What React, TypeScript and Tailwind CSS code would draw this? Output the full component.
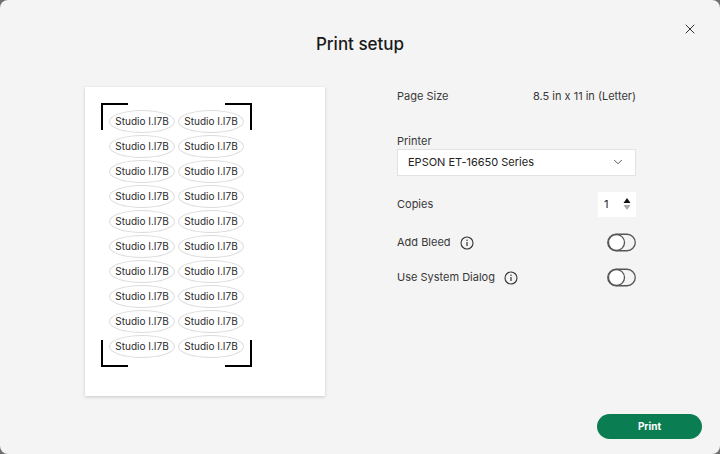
import { X, ChevronDown } from "lucide-react";

const rows = Array.from({ length: 10 }, (_, i) => i);

function LabelPill() {
  return (
    <div className="flex h-[23px] w-[66px] items-center justify-center rounded-[50%] border border-[#dcdcdc] text-[10px] text-[#2a2a2a]">
      Studio I.I7B
    </div>
  );
}

function InfoIcon() {
  return (
    <svg width="14" height="14" viewBox="0 0 14 14" className="text-[#333]">
      <circle cx="7" cy="7" r="6" fill="none" stroke="currentColor" strokeWidth="1.1" />
      <rect x="6.4" y="6" width="1.2" height="4" fill="currentColor" />
      <circle cx="7" cy="4.3" r="0.75" fill="currentColor" />
    </svg>
  );
}

function Toggle() {
  return (
    <svg width="29" height="19" viewBox="0 0 29 19">
      <rect x="0.75" y="1.25" width="27.5" height="16.5" rx="8.25" fill="none" stroke="#555" strokeWidth="1.3" />
      <circle cx="9.5" cy="9.5" r="8" fill="#fff" stroke="#555" strokeWidth="1.3" />
    </svg>
  );
}

function CropMark({ className }: { className: string }) {
  return <div className={`h-[27px] w-[27px] border-black ${className}`} />;
}

export default function App() {
  return (
    <div className="h-[454px] w-[720px] bg-[#6f6f6f] font-['Inter',sans-serif]">
      <div className="relative flex h-full w-full flex-col rounded-[8px] bg-[#f4f4f4]">
        <button type="button" className="absolute right-[22px] top-[21px] text-[#222]">
          <X size={16} strokeWidth={1.4} />
        </button>
        <h1 className="pt-[32px] text-center text-[17px] font-medium text-[#1a1a1a]">Print setup</h1>

        <div className="mt-[29px] flex items-start pl-[85px]">
          <div className="flex h-[309px] w-[240px] flex-col bg-white px-[16px] pt-[16px] shadow-[0_1px_3px_rgba(0,0,0,0.18)]">
            <div className="flex w-[151px] justify-between">
              <CropMark className="border-l-2 border-t-2" />
              <CropMark className="border-r-2 border-t-2" />
            </div>
            <div className="-mt-[20px] flex flex-col gap-[2px] pl-[8px]">
              {rows.map((r) => (
                <div key={r} className="flex gap-[3px]">
                  <LabelPill />
                  <LabelPill />
                </div>
              ))}
            </div>
            <div className="-mt-[18px] flex w-[151px] justify-between">
              <CropMark className="border-b-2 border-l-2" />
              <CropMark className="border-b-2 border-r-2" />
            </div>
          </div>

          <div className="ml-[72px] mt-[2px] flex w-[239px] flex-col text-[11px] text-[#383838]">
            <div className="flex h-[16px] items-center justify-between">
              <span>Page Size</span>
              <span>8.5 in x 11 in (Letter)</span>
            </div>
            <div className="mt-[30px] flex h-[14px] items-center">Printer</div>
            <div className="flex h-[27px] items-center justify-between border border-[#e2e2e2] bg-white pl-[10px] pr-[10px]">
              <span className="text-[#222]">EPSON ET-16650 Series</span>
              <ChevronDown size={14} strokeWidth={1.4} className="text-[#333]" />
            </div>
            <div className="mt-[16px] flex h-[25px] items-center justify-between">
              <span>Copies</span>
              <div className="flex h-[25px] w-[38px] items-center justify-between bg-white pl-[6px] pr-[5px]">
                <span className="text-[#222]">1</span>
                <svg width="8" height="14" viewBox="0 0 8 14">
                  <path d="M4 1 L7.5 6 L0.5 6 Z" fill="#111" />
                  <path d="M0.5 8 L7.5 8 L4 13 Z" fill="#aaa" />
                </svg>
              </div>
            </div>
            <div className="mt-[16px] flex h-[20px] items-center justify-between">
              <div className="flex items-center gap-[9px]">
                <span>Add Bleed</span>
                <InfoIcon />
              </div>
              <Toggle />
            </div>
            <div className="mt-[15px] flex h-[20px] items-center justify-between">
              <div className="flex items-center gap-[9px]">
                <span>Use System Dialog</span>
                <InfoIcon />
              </div>
              <Toggle />
            </div>
          </div>
        </div>

        <div className="mt-auto flex justify-end pb-[15px] pr-[18px]">
          <button
            type="button"
            className="h-[25px] w-[105px] rounded-full bg-[#0b7d53] text-[10px] font-bold text-white"
          >
            Print
          </button>
        </div>
      </div>
    </div>
  );
}
